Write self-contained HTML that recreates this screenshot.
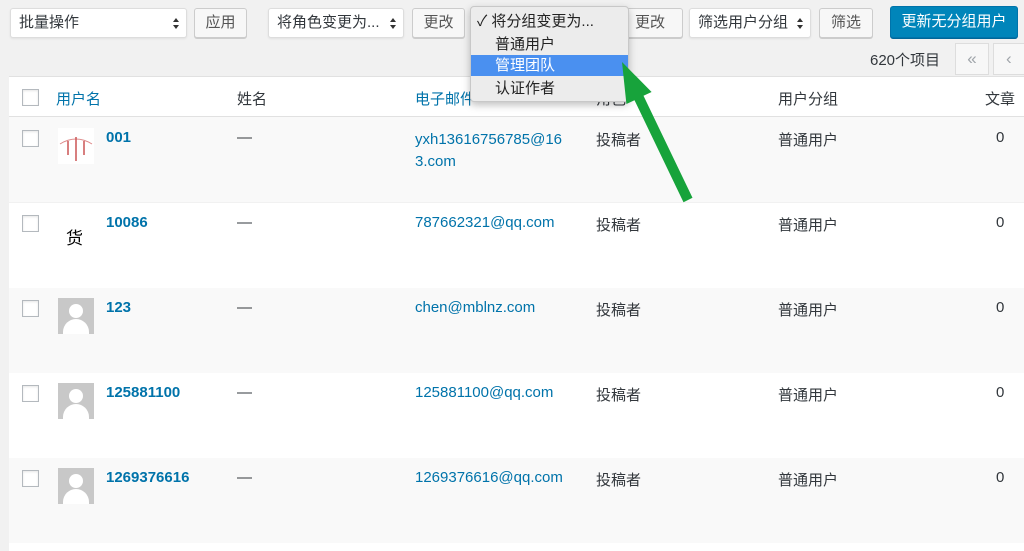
<!DOCTYPE html>
<html><head><meta charset="utf-8"><style>
html,body{margin:0;width:1024px;height:551px;overflow:hidden}
body{background:#f1f1f1;font-family:"Liberation Sans","Noto Sans CJK SC",sans-serif;font-size:15px;color:#32373c;position:relative}
.a{position:absolute;box-sizing:border-box}
.sel{background:#fff;border:1px solid #ddd;border-radius:3px;box-shadow:0 1px 2px rgba(0,0,0,.07);height:30px;padding:4px 8px;line-height:20px}
.sel:after{content:"";position:absolute;right:7px;top:9px;border:3.5px solid transparent;border-bottom:4px solid #333;border-top:none}
.sel:before{content:"";position:absolute;right:7px;top:16px;border:3.5px solid transparent;border-top:4px solid #333;border-bottom:none}
.btn{background:#f7f7f7;border:1px solid #ccc;border-radius:3px;box-shadow:0 1px 0 #ccc;height:30px;line-height:28px;text-align:center;color:#555}
.row{left:9px;right:0;height:85px}
.cb{width:17px;height:17px;border:1px solid #b4b9be;background:#fff;box-shadow:inset 0 1px 2px rgba(0,0,0,.1)}
.lnk{color:#0073aa}
.av{width:36px;height:36px;background:#c8c8c8;overflow:hidden}
.av i{position:absolute;left:11px;top:6px;width:14px;height:14px;border-radius:50%;background:#fff}
.av b{position:absolute;left:5px;top:21px;width:26px;height:22px;border-radius:13px 13px 0 0;background:#fff}
</style></head><body>
<div class="a sel" style="left:10px;top:8px;width:177px">批量操作</div>
<div class="a btn" style="left:194px;top:8px;width:53px">应用</div>
<div class="a sel" style="left:268px;top:8px;width:136px">将角色变更为...</div>
<div class="a btn" style="left:412px;top:8px;width:53px">更改</div>
<div class="a btn" style="left:617px;top:8px;width:66px">更改</div>
<div class="a sel" style="left:689px;top:8px;width:122px">筛选用户分组</div>
<div class="a btn" style="left:819px;top:8px;width:54px">筛选</div>
<div class="a" style="left:890px;top:6px;width:128px;height:32px;background:#0085ba;border:1px solid #0073aa;border-radius:3px;color:#fff;text-align:center;line-height:30px;box-shadow:0 1px 0 #006799">更新无分组用户</div>
<div class="a" style="left:870px;top:49px">620个项目</div>
<div class="a" style="left:955px;top:43px;width:34px;height:32px;border:1px solid #ddd;background:#f7f7f7;color:#a0a5aa;text-align:center;line-height:30px;font-size:17px">«</div>
<div class="a" style="left:993px;top:43px;width:40px;height:32px;border:1px solid #ddd;background:#f7f7f7;color:#a0a5aa;padding-left:12px;line-height:30px;font-size:17px">‹</div>

<div class="a" style="left:9px;top:76px;right:0;height:41px;background:#fff;border-top:1px solid #e1e1e1;border-bottom:1px solid #e1e1e1"></div>
<div class="a cb" style="left:22px;top:89px"></div>
<div class="a lnk" style="left:56px;top:88px;font-size:15px">用户名</div>
<div class="a" style="left:237px;top:88px">姓名</div>
<div class="a lnk" style="left:415px;top:88px">电子邮件</div>
<div class="a" style="left:596px;top:88px">角色</div>
<div class="a" style="left:778px;top:88px">用户分组</div>
<div class="a" style="left:985px;top:88px">文章</div>

<div class="a row" style="top:117px;background:#f9f9f9"></div>
<div class="a row" style="top:203px;background:#fff"></div>
<div class="a row" style="top:288px;background:#f9f9f9"></div>
<div class="a row" style="top:373px;background:#fff"></div>
<div class="a row" style="top:458px;background:#f9f9f9"></div>
<div class="a row" style="top:543px;height:8px;background:#fff"></div>

<div class="a cb" style="left:22px;top:130px"></div>
<div class="a" style="left:58px;top:128px;width:36px;height:36px;background:#fff"><svg width="36" height="36"><path d="M2 16Q18 6 34 16" stroke="#d88" fill="none"/><path d="M18 9V33M10 13V27M26 13V27" stroke="#c55" stroke-width="1.5"/></svg></div>
<div class="a lnk" style="left:106px;top:129px;font-weight:bold">001</div>
<div class="a" style="left:237px;top:129px">—</div>
<div class="a lnk" style="left:415px;top:129px;line-height:22px;width:165px">yxh13616756785@16<br>3.com</div>
<div class="a" style="left:596px;top:129px">投稿者</div>
<div class="a" style="left:778px;top:129px">普通用户</div>
<div class="a" style="left:996px;top:129px">0</div>

<div class="a cb" style="left:22px;top:215px"></div>
<div class="a" style="left:66px;top:224px;font-size:17px;color:#000">货</div>
<div class="a lnk" style="left:106px;top:214px;font-weight:bold">10086</div>
<div class="a" style="left:237px;top:214px">—</div>
<div class="a lnk" style="left:415px;top:214px">787662321@qq.com</div>
<div class="a" style="left:596px;top:214px">投稿者</div>
<div class="a" style="left:778px;top:214px">普通用户</div>
<div class="a" style="left:996px;top:214px">0</div>

<div class="a cb" style="left:22px;top:300px"></div>
<div class="a av" style="left:58px;top:298px"><i></i><b></b></div>
<div class="a lnk" style="left:106px;top:299px;font-weight:bold">123</div>
<div class="a" style="left:237px;top:299px">—</div>
<div class="a lnk" style="left:415px;top:299px">chen@mblnz.com</div>
<div class="a" style="left:596px;top:299px">投稿者</div>
<div class="a" style="left:778px;top:299px">普通用户</div>
<div class="a" style="left:996px;top:299px">0</div>

<div class="a cb" style="left:22px;top:385px"></div>
<div class="a av" style="left:58px;top:383px"><i></i><b></b></div>
<div class="a lnk" style="left:106px;top:384px;font-weight:bold">125881100</div>
<div class="a" style="left:237px;top:384px">—</div>
<div class="a lnk" style="left:415px;top:384px">125881100@qq.com</div>
<div class="a" style="left:596px;top:384px">投稿者</div>
<div class="a" style="left:778px;top:384px">普通用户</div>
<div class="a" style="left:996px;top:384px">0</div>

<div class="a cb" style="left:22px;top:470px"></div>
<div class="a av" style="left:58px;top:468px"><i></i><b></b></div>
<div class="a lnk" style="left:106px;top:469px;font-weight:bold">1269376616</div>
<div class="a" style="left:237px;top:469px">—</div>
<div class="a lnk" style="left:415px;top:469px">1269376616@qq.com</div>
<div class="a" style="left:596px;top:469px">投稿者</div>
<div class="a" style="left:778px;top:469px">普通用户</div>
<div class="a" style="left:996px;top:469px">0</div>

<div class="a" style="left:470px;top:6px;width:159px;height:96px;background:#ececec;border:1px solid #c8c8c8;border-radius:4px;box-shadow:0 3px 8px rgba(0,0,0,.25);color:#222;font-size:15px">
<div class="a" style="left:6px;top:3px">✓ 将分组变更为...</div>
<div class="a" style="left:24px;top:26px">普通用户</div>
<div class="a" style="left:0;right:0;top:48px;height:21px;background:#4a90f0;color:#fff;padding-left:24px;line-height:21px">管理团队</div>
<div class="a" style="left:24px;top:70px">认证作者</div>
</div>
<svg class="a" style="left:0;top:0" width="1024" height="551"><path d="M692.5 197.8L683.5 202.2L634.5 100.2L626.4 104L622 62L651.6 92L643.5 95.8Z" fill="#17a33b"/></svg>
</body></html>
